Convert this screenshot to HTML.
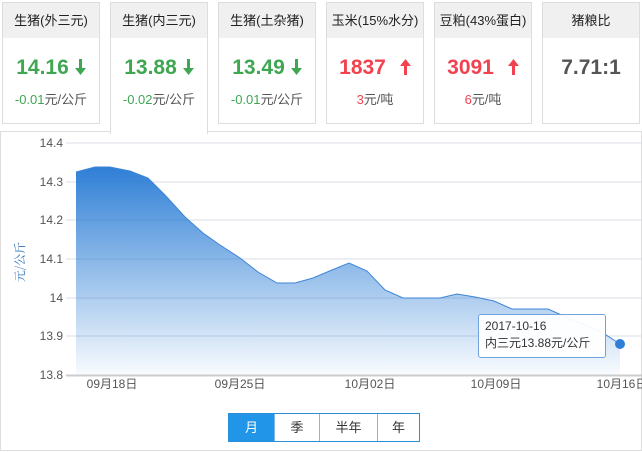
<!DOCTYPE html>
<html><head><meta charset="utf-8"><style>
body{margin:0;width:642px;height:452px;background:#fff;font-family:"Liberation Sans","Noto Sans CJK SC",sans-serif;position:relative;overflow:hidden}
.card{position:absolute;top:2px;height:122px;border:1px solid #ddd;box-sizing:border-box;background:#fff;text-align:center}
.card .h{height:35px;background:#f0f0f0;line-height:35px;font-size:13px;color:#222}
.card .v{font-size:21px;font-weight:bold;margin-top:15px;height:30px;line-height:30px}
.card .v svg{vertical-align:-1px;margin-left:6px}
.card .s{font-size:13px;color:#555;margin-top:6px}
.g{color:#3fa652}.r{color:#f0434f}
.sel{height:132px;border-bottom:none;z-index:2;background:#fff}
.panel{position:absolute;left:0;top:131px;width:642px;height:320px;border:1px solid #ddd;box-sizing:border-box}
.btns{position:absolute;left:228px;top:413px;height:29px;display:flex;border:1px solid #2a8fd9;box-sizing:border-box}
.btns div{height:27px;line-height:27px;text-align:center;font-size:13px;color:#333;border-left:1px solid #7fb8e8}
.btns div:first-child{border-left:none;background:#2196e8;color:#fff}
.tip{position:absolute;left:478px;top:314px;width:128px;height:44px;border:1px solid #6fa2dc;border-radius:3px;background:rgba(255,255,255,.95);font-size:12px;color:#333;box-sizing:border-box;padding:3px 6px;line-height:17px}
</style></head><body>
<div class="card" style="left:2px;width:98px"><div class="h">生猪(外三元)</div><div class="v g">14.16<svg width="11" height="16" viewBox="0 0 11 16"><path d="M4 0h3v9h4l-5.5 7L0 9h4z" fill="#3fa652"/></svg></div><div class="s"><span class="g">-0.01</span>元/公斤</div></div>
<div class="card sel" style="left:110px;width:98px"><div class="h">生猪(内三元)</div><div class="v g">13.88<svg width="11" height="16" viewBox="0 0 11 16"><path d="M4 0h3v9h4l-5.5 7L0 9h4z" fill="#3fa652"/></svg></div><div class="s"><span class="g">-0.02</span>元/公斤</div></div>
<div class="card" style="left:218px;width:98px"><div class="h">生猪(土杂猪)</div><div class="v g">13.49<svg width="11" height="16" viewBox="0 0 11 16"><path d="M4 0h3v9h4l-5.5 7L0 9h4z" fill="#3fa652"/></svg></div><div class="s"><span class="g">-0.01</span>元/公斤</div></div>
<div class="card" style="left:326px;width:98px"><div class="h">玉米(15%水分)</div><div class="v r">1837<svg style="margin-left:14px" width="11" height="16" viewBox="0 0 11 16"><path d="M4 16h3V7h4L5.5 0 0 7h4z" fill="#f0434f"/></svg></div><div class="s"><span class="r">3</span>元/吨</div></div>
<div class="card" style="left:434px;width:98px"><div class="h">豆粕(43%蛋白)</div><div class="v r">3091<svg style="margin-left:14px" width="11" height="16" viewBox="0 0 11 16"><path d="M4 16h3V7h4L5.5 0 0 7h4z" fill="#f0434f"/></svg></div><div class="s"><span class="r">6</span>元/吨</div></div>
<div class="card" style="left:542px;width:98px"><div class="h">猪粮比</div><div class="v" style="color:#555">7.71:1</div></div>
<div class="panel"></div>
<svg style="position:absolute;left:0;top:0" width="642" height="452">
<defs><linearGradient id="a" x1="0" y1="0" x2="0" y2="1"><stop offset="0" stop-color="#2f7fd6"/><stop offset="1" stop-color="#2f7fd6" stop-opacity="0.03"/></linearGradient></defs>
<g stroke="#d8dde3" stroke-width="1">
<line x1="66" y1="143" x2="642" y2="143"/><line x1="66" y1="182" x2="642" y2="182"/><line x1="66" y1="220" x2="642" y2="220"/><line x1="66" y1="259" x2="642" y2="259"/><line x1="66" y1="298" x2="642" y2="298"/><line x1="66" y1="336" x2="642" y2="336"/>
</g>
<path d="M76 172L95 167L110 167L130 171L148 178L165 195L185 217L203 233L220 245L240 258L258 272L277 283L295 283L313 278L332 270L349 263L367 271L385 290L403 298L420 298L440 298L457 294L475 297L494 301L512 309L530 309L548 309L566 317L585 325L603 333L620 344L620 375L76 375Z" fill="url(#a)"/>
<path d="M76 172L95 167L110 167L130 171L148 178L165 195L185 217L203 233L220 245L240 258L258 272L277 283L295 283L313 278L332 270L349 263L367 271L385 290L403 298L420 298L440 298L457 294L475 297L494 301L512 309L530 309L548 309L566 317L585 325L603 333L620 344" fill="none" stroke="#3d86d6" stroke-width="1"/>
<line x1="66" y1="375.5" x2="642" y2="375.5" stroke="#ccc" stroke-width="2"/>
<circle cx="620" cy="344" r="5" fill="#2f7fd6"/>
<g font-size="12" fill="#555" text-anchor="end" font-family="Liberation Sans,sans-serif">
<text x="63" y="147">14.4</text><text x="63" y="186">14.3</text><text x="63" y="224">14.2</text><text x="63" y="263">14.1</text><text x="63" y="302">14</text><text x="63" y="340">13.9</text><text x="63" y="379">13.8</text></g>
<g font-size="12" fill="#555" text-anchor="middle" font-family="Liberation Sans,Noto Sans CJK SC,sans-serif">
<text x="112" y="388">09月18日</text><text x="240" y="388">09月25日</text><text x="370" y="388">10月02日</text><text x="496" y="388">10月09日</text><text x="622" y="388">10月16日</text></g>
<text transform="translate(24,262) rotate(-90)" font-size="12" fill="#2f6fb8" text-anchor="middle" font-family="Noto Serif CJK SC,serif">元/公斤</text>
</svg>
<div class="tip">2017-10-16<br>内三元13.88元/公斤</div>
<div class="btns"><div style="width:45px">月</div><div style="width:44px">季</div><div style="width:57px">半年</div><div style="width:41px">年</div></div>
</body></html>
